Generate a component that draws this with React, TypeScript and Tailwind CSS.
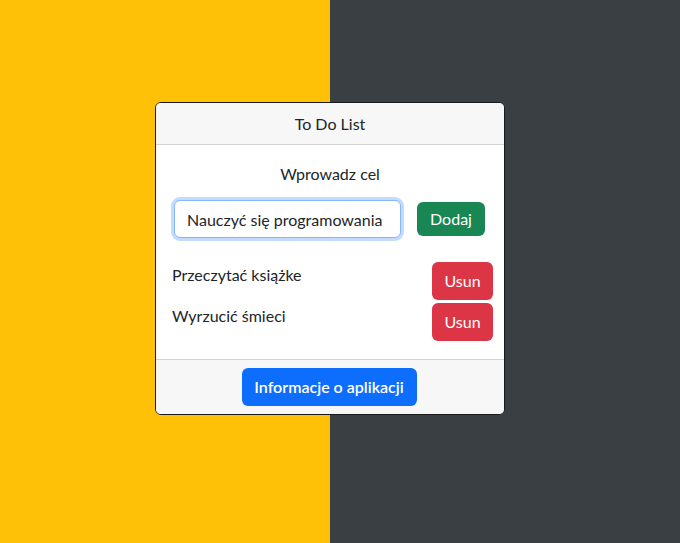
import React from "react";

export default function App() {
  const items = ["Przeczytać książke", "Wyrzucić śmieci"];
  return (
    <div
      className="h-[543px] w-full bg-[linear-gradient(to_right,#ffc107_330px,#3a3f44_330px)] pt-[102px] pl-[155px] text-[16px] leading-6 text-[#212529]"
      style={{ fontFamily: "Lato, 'Liberation Sans', sans-serif" }}
    >
      <div className="w-[350px] overflow-hidden rounded-md border border-[#1a1a1a] bg-white">
        <div className="border-b border-[#d3d3d3] bg-[#f7f7f7] pt-[9px] pb-2 text-center">To Do List</div>
        <div className="px-4 pt-[17px] pb-[18px]">
          <div className="text-center">Wprowadz cel</div>
          <div className="mt-[14px] flex items-center">
            <input
              readOnly
              value="Nauczyć się programowania"
              className="ml-[2px] h-[38px] w-[227px] rounded-md border border-[#86b7fe] bg-white px-3 text-[16px] text-[#212529] shadow-[0_0_0_3px_rgba(13,110,253,0.25)] outline-none"
              style={{ fontFamily: "Lato, 'Liberation Sans', sans-serif" }}
            />
            <button className="ml-4 h-[34px] w-[68px] rounded-md bg-[#198754] text-white">Dodaj</button>
          </div>
          <div className="mt-[24px] flex flex-col gap-[3px]">
            {items.map((t) => (
              <div key={t} className="flex items-start justify-between">
                <span className="pt-px">{t}</span>
                <button className="-mr-[5px] h-[38px] w-[61px] rounded-md bg-[#dc3545] text-white">Usun</button>
              </div>
            ))}
          </div>
        </div>
        <div className="flex justify-center border-t border-[#d3d3d3] bg-[#f7f7f7] pt-2 pb-2">
          <button className="-ml-[2px] h-[38px] w-[175px] rounded-md bg-[#0d6efd] font-semibold text-white">Informacje o aplikacji</button>
        </div>
      </div>
    </div>
  );
}
